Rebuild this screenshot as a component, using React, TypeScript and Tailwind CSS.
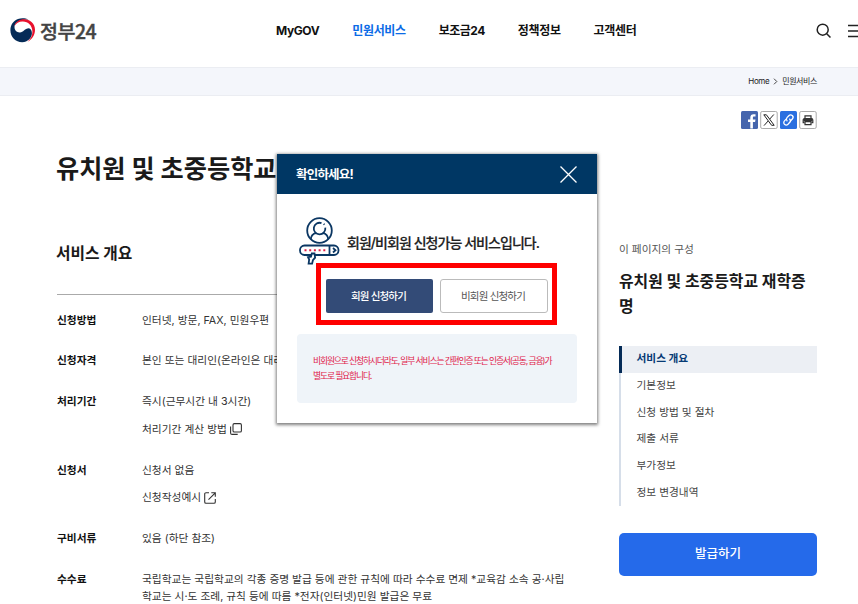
import type { ReactNode } from "react";

const menus = [
  { label: "MyGOV", style: "tracking-[-0.4px]" },
  { label: "민원서비스", style: "text-[#0b6be6]" },
  { label: "보조금24", style: "tracking-[-0.500px]" },
  { label: "정책정보", style: "" },
  { label: "고객센터", style: "" },
];

const sections = ["기본정보", "신청 방법 및 절차", "제출 서류", "부가정보", "정보 변경내역"];

function Logo() {
  return (
    <div className="flex items-center gap-[4px]">
      <svg width="26" height="25" viewBox="0 0 26 25">
        <path
          d="M18.500 1.600C15.500.100 11.500-.200 8 1 3.300 2.700.400 7 .400 12.200c0 6.700 5.200 12 11.800 12 5.500 0 9.500-3.900 9.700-8.600.2-3.400-1.700-5.500-4.200-5.200-3 .4-4.300 3.700-7.700 4-3.300.2-5.600-2.200-5.500-5.600C4.600 4.500 10 .900 18.500 1.600z"
          fill="#052b57"
        />
        <path
          d="M4.400 8.300C5.200 4 9.300 1.300 14 1.300c6.200 0 11 4.600 11 10.500 0 5.200-2.800 9.600-7.300 12 3.200-3.100 5-6.800 4.700-10.800C22 7.700 18.300 3.700 12.800 3.600 9 3.500 6 5.300 4.400 8.300z"
          fill="#e8112d"
        />
      </svg>
      <span className="mt-px font-['Noto_Sans_CJK_KR',sans-serif] text-[19.500px] leading-6 font-medium tracking-[-0.5px] text-[#444] whitespace-nowrap [-webkit-text-stroke:0.4px_#444]">
        정부24
      </span>
    </div>
  );
}

function Header() {
  return (
    <header className="flex h-[67px] items-center pl-[10px] pb-[6px]">
      <div className="w-[266px] shrink-0">
        <Logo />
      </div>
      <nav className="flex w-[540px] shrink-0 gap-[33px] text-[12px] font-bold tracking-[-0.35px] text-[#111] whitespace-nowrap">
        {menus.map((menu) => (
          <a key={menu.label} className={menu.style}>
            {menu.label}
          </a>
        ))}
      </nav>
      <svg className="shrink-0" width="16" height="16" viewBox="0 0 16 16" fill="none" stroke="#222" strokeWidth="1.5">
        <circle cx="6.700" cy="6.700" r="5.500" />
        <path d="M10.700 10.700L14.500 14.500" />
      </svg>
      <svg className="ml-4 shrink-0" width="10" height="14" viewBox="0 0 10 14" stroke="#222" strokeWidth="1.400">
        <path d="M0 1.500h10M0 7h10M0 12.500h10" />
      </svg>
    </header>
  );
}

function ShareButtons() {
  return (
    <div className="flex gap-[2px]">
      <svg width="17" height="18" viewBox="0 0 17 18">
        <rect width="17" height="18" rx="1.500" fill="#4565ad" />
        <path d="M9.300 17.500V11H7V8.400h2.300V6.700c0-2.400 1.300-3.500 3.300-3.500.9 0 1.600.1 1.900.1v2.300h-1.300c-1.100 0-1.300.5-1.300 1.200v1.600h2.600l-.4 2.600h-2.200v6.500z" fill="#fff" />
      </svg>
      <svg width="18" height="18" viewBox="0 0 18 18" fill="none" stroke="#222">
        <rect x=".7" y=".5" width="16.500" height="17" rx="1.500" stroke="#aaa" />
        <path d="M3.800 3.800h2.600l7.800 10.500h-2.600z" />
        <path d="M13.800 3.500L9.700 8.100M8.100 10L4 14.600" />
      </svg>
      <svg width="17" height="18" viewBox="0 0 17 18" fill="none" stroke="#fff" strokeWidth="1.300" strokeLinecap="round">
        <rect width="17" height="18" rx="1.500" fill="#2a6fe0" stroke="none" />
        <path d="M7 9.800c-1-1.100-.8-2.300 0-3.200l1.800-1.900c1.100-1.100 2.500-1 3.500-.1s.9 2.400 0 3.400l-1.400 1.500" />
        <path d="M9.700 8.100c1 1.100.9 2.400.1 3.200L8 13.200c-1.100 1.100-2.500 1-3.500.1s-.9-2.400 0-3.400l1.400-1.500" />
      </svg>
      <svg width="18" height="18" viewBox="0 0 18 18" fill="none" stroke="#333" strokeWidth="1.200">
        <rect x=".7" y=".5" width="16.500" height="17" rx="1.500" stroke="#aaa" strokeWidth="1" />
        <path d="M6 7.500V4.800h6v2.700" />
        <path d="M5.500 11.700H4.200V8.900c0-.7.4-1.200 1.200-1.200h7.200c.8 0 1.200.5 1.200 1.200v2.800h-1.300" />
        <path d="M4.500 8h9v2.200h-9z" fill="#333" stroke="none" />
        <path d="M6 10.600h6v3H6z" fill="#fff" />
      </svg>
    </div>
  );
}

function Row({ title, height, children }: { title: string; height: string; children: ReactNode }) {
  return (
    <div className={`flex ${height}`}>
      <dt className="w-[85px] shrink-0 font-bold text-[#111]">{title}</dt>
      <dd className="text-[#333]">{children}</dd>
    </div>
  );
}

function Overview() {
  return (
    <section className="-ml-px w-[511px] shrink-0 whitespace-nowrap">
      <h1 className="mt-px text-[25.200px] leading-[36px] font-bold text-[#1a1a1a]">유치원 및 초중등학교 재학증명</h1>
      <h2 className="mt-[55px] text-[15.8px] leading-6 font-bold text-[#1a1a1a]">서비스 개요</h2>
      <dl className="mt-[28px] ml-px border-t border-[#aaa] pt-[16.500px] text-[10.72px] leading-[17.500px]">
        <Row title="신청방법" height="h-[40.500px]">인터넷, 방문, FAX, 민원우편</Row>
        <Row title="신청자격" height="h-[41px]">본인 또는 대리인(온라인은 대리인 신청 불가)</Row>
        <Row title="처리기간" height="h-[68.800px]">
          <p>즉시(근무시간 내 3시간)</p>
          <p className="mt-[10px] flex items-center gap-[3px]">
            처리기간 계산 방법
            <svg width="12" height="12" viewBox="0 0 12 12" fill="none" stroke="#333" strokeWidth="1.100">
              <rect x="3" y=".6" width="8.400" height="8.400" rx="1.300" />
              <path d="M.6 3.500v6.400c0 .9.6 1.500 1.500 1.500h5.600" />
            </svg>
          </p>
        </Row>
        <Row title="신청서" height="h-[68.500px]">
          <p>신청서 없음</p>
          <p className="mt-[10px] flex items-center gap-[3px]">
            신청작성예시
            <svg width="12" height="12" viewBox="0 0 12 12" fill="none" stroke="#333" strokeWidth="1.100">
              <path d="M5 .8H2C1.200.8.700 1.300.700 2v8c0 .8.5 1.300 1.300 1.300h8c.8 0 1.300-.5 1.300-1.300V7" />
              <path d="M7.300.8h4v4M11.300.8L4.500 7.600" />
            </svg>
          </p>
        </Row>
        <Row title="구비서류" height="h-[40.500px]">있음 (하단 참조)</Row>
        <Row title="수수료" height="h-[36px]">
          국립학교는 국립학교의 각종 증명 발급 등에 관한 규칙에 따라 수수료 면제 *교육감 소속 공·사립
          <br />
          학교는 시·도 조례, 규칙 등에 따름 *전자(인터넷)민원 발급은 무료
        </Row>
      </dl>
    </section>
  );
}

function PageIndex() {
  return (
    <aside className="mt-[90px] w-[198px] shrink-0">
      <p className="pt-px text-[10.7px] leading-[18px] text-[#555]">이 페이지의 구성</p>
      <h3 className="mt-[10px] text-[15.9px] leading-[25px] font-bold break-all text-[#1a1a1a]">
        유치원 및 초중등학교 재학증명
      </h3>
      <ul className="mt-[27px] border-l-2 border-[#d6dee9] text-[10.7px] text-[#444]">
        <li className="-ml-[2px] flex h-[26.700px] items-center border-l-3 border-[#052b57] bg-[#eceff4] pl-[14.500px] font-bold text-[#063a74]">
          서비스 개요
        </li>
        {sections.map((item) => (
          <li key={item} className="flex h-[26.700px] items-center pl-[15.500px]">
            {item}
          </li>
        ))}
      </ul>
      <button className="mt-[27px] h-[43px] w-full rounded-[5px] bg-[#256aea] text-[12.500px] font-medium text-white">
        발급하기
      </button>
    </aside>
  );
}

function MemberIcon() {
  return (
    <svg width="42" height="48" viewBox="0 0 42 48" fill="none" stroke="#0b3763" strokeWidth="1.800">
      <circle cx="20.500" cy="13.500" r="12.300" />
      <path d="M22.500 6.100a5.800 5.800 0 1 0 3.800 4.600" />
      <path d="M24.700 6.800l.8.800" />
      <path d="M11.800 22.300c.3-3.800 2.200-5.600 5.300-6.100M29.200 22.300c-.3-3.800-2.200-5.600-5.300-6.100" />
      <rect x="1" y="28.500" width="38.500" height="9.500" rx="4.500" fill="#fff" />
      <path d="M30.500 28.500V38M34 31l2.500 2.200L34 35.500" />
      <path d="M5.500 33.300h21" stroke="#e0214a" strokeWidth="2" strokeDasharray="2 2.700" />
      <path d="M12.800 36.500l-.8 3.200-3 .5 1.200 2.300-.6 4.200h3.500l.8-3.500 2.200-2.500-.6-4.200z" fill="#fff" />
    </svg>
  );
}

function ConfirmDialog() {
  return (
    <div className="absolute top-[154px] left-[277px] h-[269px] w-[320px] bg-white shadow-[0_1px_3px_1px_rgba(0,0,0,0.5)] whitespace-nowrap">
      <div className="flex h-10 items-center justify-between bg-[#003764] pr-5 pl-[19px]">
        <span className="pt-[2px] text-[12.500px] font-bold tracking-[-0.8px] text-white">확인하세요!</span>
        <svg width="17" height="17" viewBox="0 0 17 17" stroke="#fff" strokeWidth="1.300">
          <path d="M.5.5l16 16M16.500.5l-16 16" />
        </svg>
      </div>
      <div className="flex h-[69px] items-start pt-[23px] pl-[22px]">
        <MemberIcon />
        <p className="mt-[14px] ml-[6px] text-[14px] leading-6 font-medium tracking-[-0.95px] text-[#222] [-webkit-text-stroke:0.2px_#222]">
          회원/비회원 신청가능 서비스입니다.
        </p>
      </div>
      <div className="relative ml-[39px] flex h-[62px] w-[241px] gap-[7px] border-5 border-[#fe0000] pt-[11px] pl-[5px] text-[10.500px] tracking-[-0.8px]">
        <button className="h-[34px] w-[107px] rounded-[2px] bg-[#334b77] pt-px pr-[2px] font-medium text-white">
          회원 신청하기
        </button>
        <button className="h-[34px] w-[108px] rounded-[3px] border border-[#bbb] bg-white pt-px pr-[2px] text-[#555]">
          비회원 신청하기
        </button>
      </div>
      <div className="mt-[9px] ml-5 h-[69px] w-[280px] rounded-[4px] bg-[#eff4f9] pt-[19px] pl-4 text-[8.800px] leading-[15px] tracking-[-1.150px] text-[#e0214a]">
        비회원으로 신청하시더라도, 일부 서비스는 간편인증 또는 인증서(공동, 금융)가
        <br />
        별도로 필요합니다.
      </div>
    </div>
  );
}

export default function App() {
  return (
    <div className="relative h-[604px] w-[858px] overflow-hidden bg-white font-['Inter','Noto_Sans_CJK_KR',sans-serif]">
      <Header />
      <div className="flex h-[29px] items-center justify-end gap-[4px] border-y border-[#ebedf2] bg-[#f4f6fb] pr-[41px] pb-px text-[8px] tracking-[-0.4px] text-[#222]">
        <span>Home</span>
        <svg width="5" height="7" viewBox="0 0 5 7" fill="none" stroke="#444">
          <path d="M1 .7l2.800 2.800L1 6.300" />
        </svg>
        <span>민원서비스</span>
      </div>
      <div className="mt-[15px] mr-[41px] flex h-[18px] justify-end">
        <ShareButtons />
      </div>
      <main className="mt-[21px] flex gap-[52px] pl-[57px]">
        <Overview />
        <PageIndex />
      </main>
      <ConfirmDialog />
    </div>
  );
}
